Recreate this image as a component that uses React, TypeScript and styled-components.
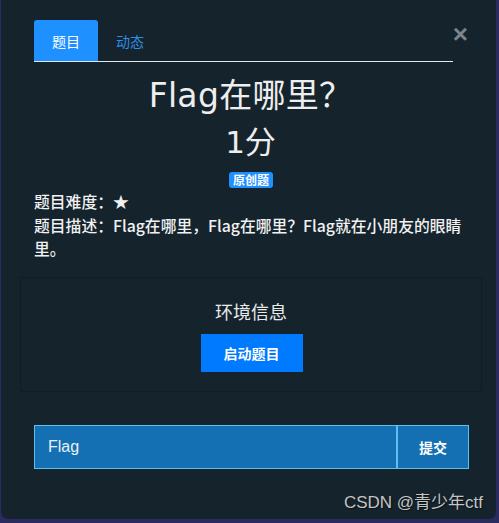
import React from "react";
import styled, { createGlobalStyle } from "styled-components";

const Global = createGlobalStyle`
  html, body { margin: 0; padding: 0; }
  body {
    background: #2b2b62;
    width: 499px;
    height: 523px;
    overflow: hidden;
    font-family: "Noto Sans CJK SC", "Liberation Sans", sans-serif;
  }
`;

const Modal = styled.div`
  position: relative;
  box-sizing: border-box;
  width: 495px;
  height: 519px;
  margin-left: 1px;
  background: #15232d;
  border-radius: 0 0 7px 7px;
  padding: 20px 29px 0 33px;
  display: flex;
  flex-direction: column;
`;

const Header = styled.div`
  display: flex;
  align-items: flex-start;
`;

const Tabs = styled.div`
  display: flex;
  width: 420px;
  border-bottom: 1px solid #e4e8ea;
`;

const Tab = styled.div<{ $active?: boolean }>`
  height: 41px;
  padding: 0 18px;
  display: flex;
  align-items: center;
  font-size: 14px;
  border-radius: 3px 3px 0 0;
  background: ${(p) => (p.$active ? "#1e90ff" : "transparent")};
  color: ${(p) => (p.$active ? "#ffffff" : "#2e8fe3")};
`;

const Close = styled.div`
  margin-left: auto;
  margin-top: 5px;
  margin-right: -1px;
  font-family: "Liberation Sans", sans-serif;
  font-weight: 700;
  font-size: 26px;
  line-height: 18px;
  color: #7b858b;
`;

const Title = styled.h3`
  margin: 14px 0 0;
  text-align: center;
  font-family: "DejaVu Sans", "Noto Sans CJK SC", sans-serif;
  font-weight: 400;
  font-size: 33px;
  line-height: 40px;
  letter-spacing: 0.3px;
  color: #eeeeee;
`;

const Score = styled.div`
  margin-top: 6px;
  text-align: center;
  font-family: "DejaVu Sans", "Noto Sans CJK SC", sans-serif;
  font-size: 31px;
  line-height: 40px;
  color: #eeeeee;
`;

const BadgeRow = styled.div`
  margin-top: 10px;
  display: flex;
  justify-content: center;
`;

const Badge = styled.span`
  background: #1e90ff;
  color: #fff;
  font-size: 12px;
  font-weight: 700;
  line-height: 16px;
  padding: 0 4px;
  border-radius: 3px;
  margin-left: 1px;
`;

const Desc = styled.div`
  margin-top: 2px;
  font-size: 15.8px;
  font-weight: 500;
  line-height: 23.5px;
  color: #f1f1f1;
`;

const EnvBox = styled.div`
  margin: 16px -15px 0 -14px;
  border: 1px solid #111d25;
  padding: 20px 0 19px;
  display: flex;
  flex-direction: column;
  align-items: center;
`;

const EnvTitle = styled.div`
  font-size: 18px;
  line-height: 26px;
  color: #eaeaea;
`;

const StartButton = styled.button`
  margin-top: 10px;
  width: 102px;
  height: 38px;
  border: none;
  background: #007bff;
  color: #fff;
  font-family: "Noto Sans CJK SC", sans-serif;
  font-size: 14px;
  font-weight: 700;
  margin-left: 1px;
`;

const InputGroup = styled.div`
  margin-top: 33px;
  display: flex;
  height: 44px;
  width: 435px;
`;

const FlagInput = styled.div`
  flex: 1;
  box-sizing: border-box;
  border: 1px solid #5cc0f1;
  background: #1470b3;
  color: #e9f1f8;
  font-family: "Liberation Sans", sans-serif;
  font-size: 16px;
  display: flex;
  align-items: center;
  padding-left: 13px;
`;

const SubmitButton = styled.button`
  box-sizing: border-box;
  width: 73px;
  height: 44px;
  border: 1px solid #5cc0f1;
  border-left: 2px solid #5cc0f1;
  margin-left: -1px;
  background: #1470b3;
  color: #fff;
  font-family: "Noto Sans CJK SC", sans-serif;
  font-size: 14px;
  font-weight: 700;
`;

const Watermark = styled.div`
  position: absolute;
  right: 13px;
  bottom: 6px;
  font-family: "Liberation Sans", "Noto Sans CJK SC", sans-serif;
  font-size: 17px;
  color: #c4c4c4;
  text-shadow: 1px 1px 1px rgba(0, 0, 0, 0.5);
`;

export default function App() {
  return (
    <>
      <Global />
      <Modal>
        <Header>
          <Tabs>
            <Tab $active>题目</Tab>
            <Tab>动态</Tab>
          </Tabs>
          <Close>×</Close>
        </Header>
        <Title>Flag在哪里？</Title>
        <Score>1分</Score>
        <BadgeRow>
          <Badge>原创题</Badge>
        </BadgeRow>
        <Desc>
          <div>题目难度：★</div>
          <div>题目描述：Flag在哪里，Flag在哪里？Flag就在小朋友的眼睛里。</div>
        </Desc>
        <EnvBox>
          <EnvTitle>环境信息</EnvTitle>
          <StartButton>启动题目</StartButton>
        </EnvBox>
        <InputGroup>
          <FlagInput>Flag</FlagInput>
          <SubmitButton>提交</SubmitButton>
        </InputGroup>
        <Watermark>CSDN @青少年ctf</Watermark>
      </Modal>
    </>
  );
}
